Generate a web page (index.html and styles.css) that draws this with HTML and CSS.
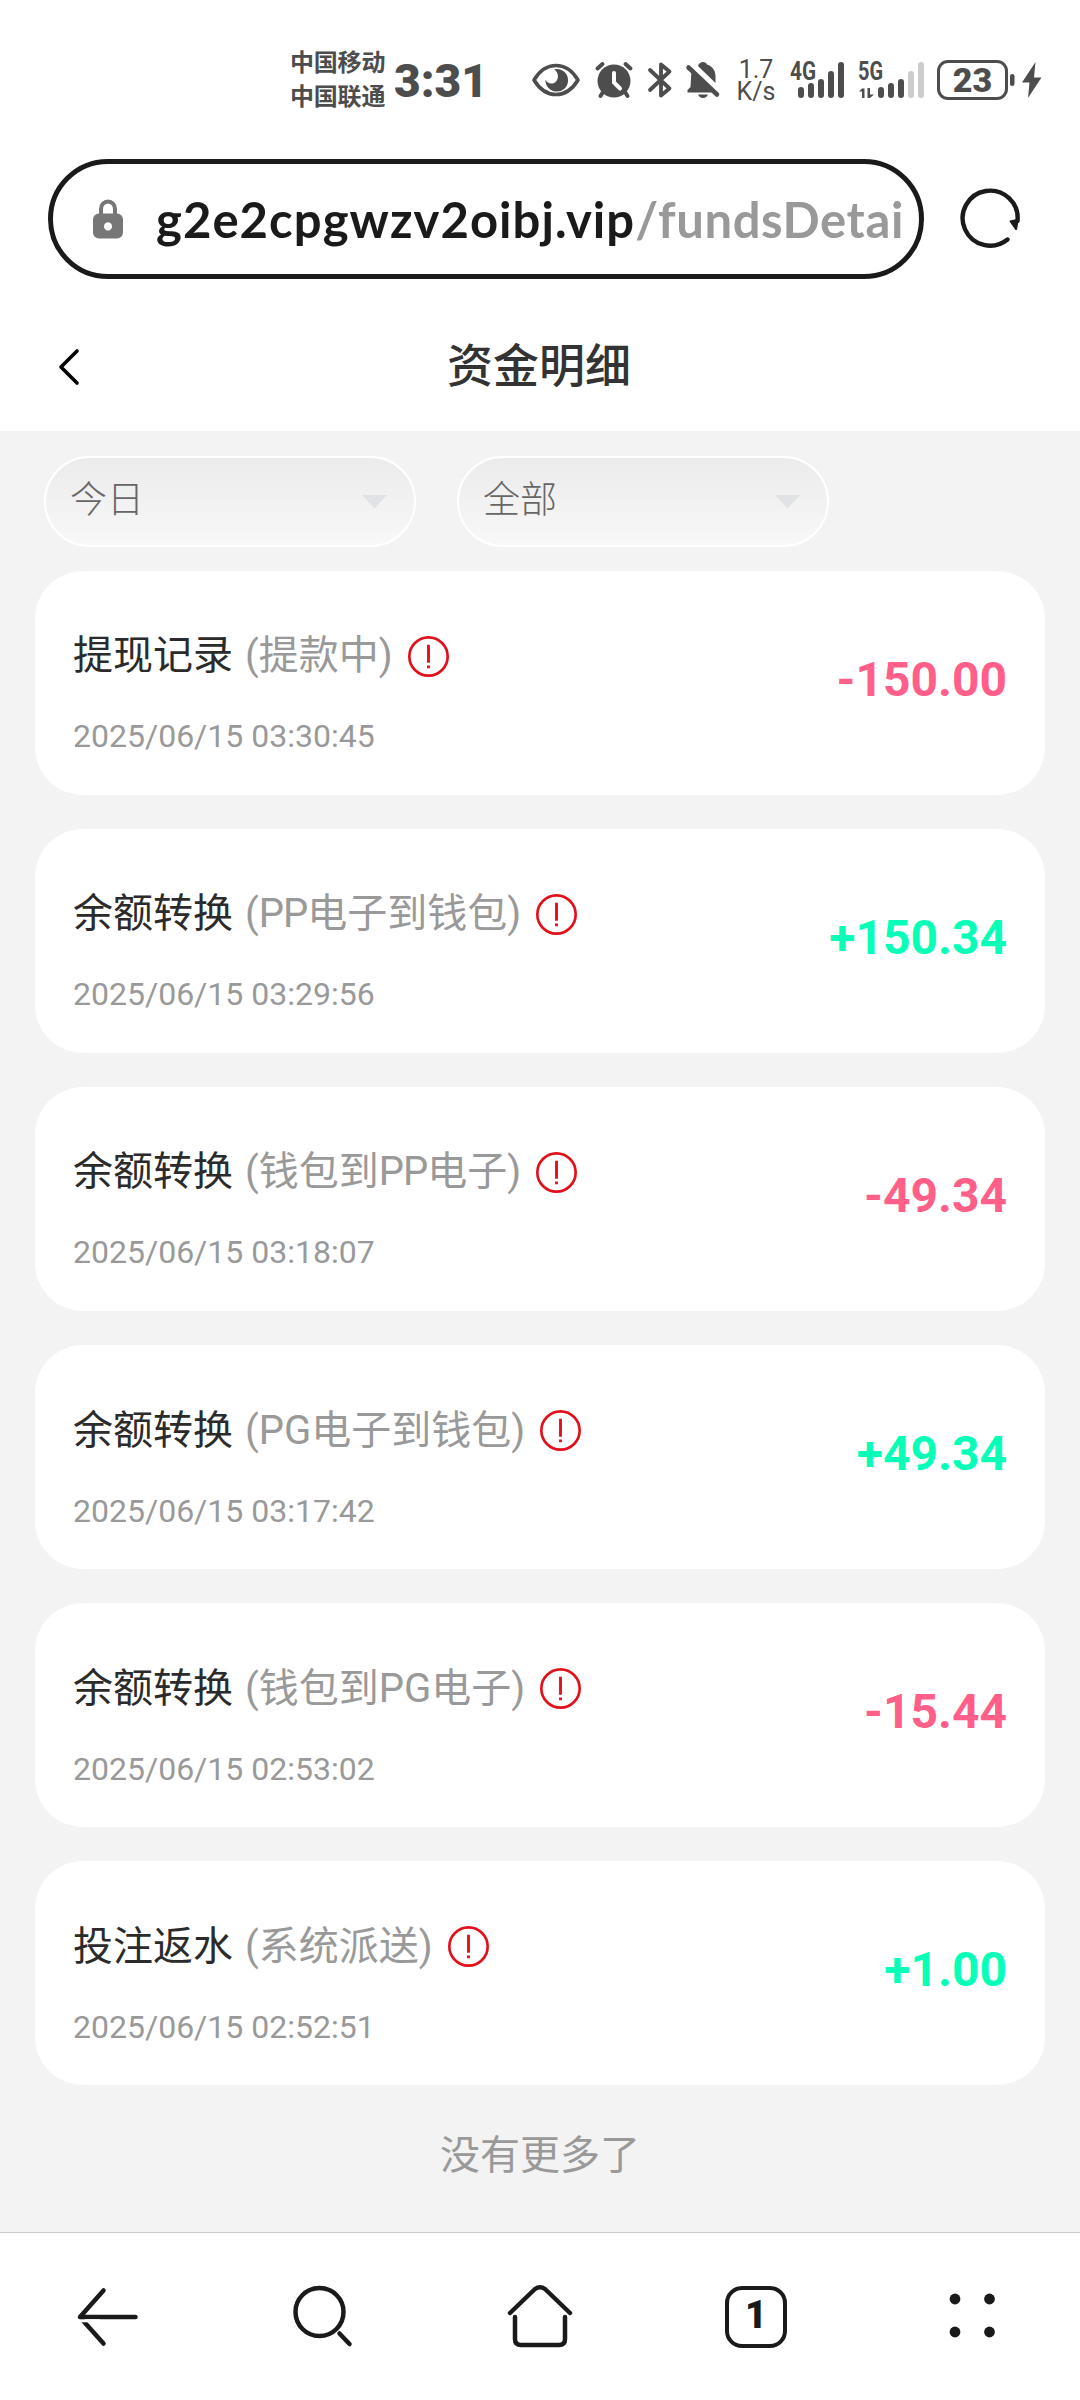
FILE: index.html
```html
<!DOCTYPE html>
<html lang="zh-CN">
<head>
<meta charset="utf-8">
<title>资金明细</title>
<link rel="stylesheet" href="styles.css">
</head>
<body>
<svg class="defs" width="0" height="0" aria-hidden="true">
  <symbol id="alert" viewBox="0 0 40 40">
    <circle cx="20" cy="20" r="18.7" fill="none" stroke="#e1101b" stroke-width="2.6"/>
    <path d="M18.6 8.5h2.8v17.5h-2.8zM18.6 28.7h2.8v2.8h-2.8z" fill="#e1101b"/>
  </symbol>
</svg>
<div class="screen">
  <header class="status">
    <div class="carriers"><span>中国移动</span><span>中国联通</span></div>
    <div class="clock">3:31</div>
    <svg class="eye" width="48" height="34" viewBox="0 0 48 34">
      <path d="M2 17C8 7 16 2.5 24 2.5S40 7 46 17C40 27 32 31.500 24 31.500S8 27 2 17Z" fill="none" stroke="#4d4d4d" stroke-width="3.6" stroke-linejoin="round"/>
      <path d="M25 6A11.300 11.300 0 1 1 13.500 16.500C15 20.500 20 22 23.500 19C27 16 27 9.500 22 6.300Z" fill="#4d4d4d"/>
    </svg>
    <svg class="alarm" width="38" height="38" viewBox="0 0 38 38">
      <g stroke="#4d4d4d" stroke-width="4" stroke-linecap="round"><path d="M2.500 7.500 7.500 3M35.500 7.500 30.500 3M8 31 5.500 35M30 31l2.500 4"/></g>
      <circle cx="19" cy="20" r="16.500" fill="#4d4d4d"/>
      <path d="M19 12v9.500l6 6" fill="none" stroke="#fff" stroke-width="4" stroke-linecap="round"/>
    </svg>
    <svg class="bluetooth" width="24" height="38" viewBox="0 0 24 38">
      <path d="M2 9 21.500 27.500 13 34.500V3.500L21.500 10.500 2 29" fill="none" stroke="#4d4d4d" stroke-width="3.800" stroke-linecap="round" stroke-linejoin="round"/>
    </svg>
    <svg class="bell" width="34" height="38" viewBox="0 0 34 38">
      <path d="M5.500 9 28 31.500H1.500V29L4.500 26ZM12 5C13 2 15 1 17 1S20.500 2 21 3.500C27 5.500 29.500 10 29.500 15V22Z M12 33.500h10C21 36 19 37 17 37S13 36 12 33.500Z" fill="#4d4d4d"/>
      <path d="M2.500 6.500 31 33.500" stroke="#4d4d4d" stroke-width="4.500" stroke-linecap="round"/>
    </svg>
    <div class="speed"><span>1.7</span><span>K/s</span></div>
    <svg class="signal" width="54" height="38" viewBox="0 0 54 38">
      <text x="0" y="18.500" textLength="26" lengthAdjust="spacingAndGlyphs">4G</text>
      <path d="M11 29v5M21 25v9M31 21v13M41 13v21M51 4v30"/>
    </svg>
    <svg class="signal second" width="66" height="38" viewBox="0 0 66 38">
      <text x="0" y="18.500" textLength="25" lengthAdjust="spacingAndGlyphs">5G</text>
      <path d="M23 29v5M33 25v9M43 21v13"/>
      <path class="off" d="M53 13v21M63 4v30"/>
      <path class="data" d="M1 30.500 4 27.500H6.500V37H4V30.500ZM9.500 27H12V33.500H16L12 37H9.500Z"/>
    </svg>
    <div class="battery">23</div>
    <svg class="bolt" width="32" height="38" viewBox="0 0 32 38">
      <rect x="0" y="13" width="4.500" height="12" rx="2.200" fill="#4d4d4d"/>
      <path d="M25.500 1 12 21.500h7.500L18 37 31.500 16.500H24Z" fill="#4d4d4d"/>
    </svg>
  </header>

  <div class="address-row">
    <div class="address">
      <svg width="30" height="40" viewBox="0 0 30 40">
        <path d="M8 16V10a7 7.500 0 0 1 14 0v6" fill="none" stroke="#777" stroke-width="4"/>
        <path fill-rule="evenodd" d="M6 14.500H24a6 6 0 0 1 6 6V33.500a6 6 0 0 1-6 6H6a6 6 0 0 1-6-6V20.500a6 6 0 0 1 6-6ZM15 23.200a4 4.200 0 1 0 .01 0Z" fill="#777"/>
      </svg>
      <div class="url"><span class="host">g2e2cpgwzv2oibj.vip</span><span class="path">/fundsDetai</span></div>
    </div>
    <svg class="reload" width="62" height="62" viewBox="0 0 62 62">
      <path d="M48.500 51.500A27.500 27.500 0 1 1 58.500 33" fill="none" stroke="#1a1a1a" stroke-width="4.400" stroke-linecap="round"/>
      <path d="M51 32.500 60 30.500 58 41.500Q56.500 43 55.500 40.500L50.500 33.500Z" fill="#1a1a1a"/>
    </svg>
  </div>

  <div class="titlebar">
    <svg class="back" width="22" height="38" viewBox="0 0 22 38"><path d="M19 3 3 19 19 35" fill="none" stroke="#000" stroke-width="3.600" stroke-linecap="round" stroke-linejoin="round"/></svg>
    <h1>资金明细</h1>
  </div>

  <main>
    <div class="filters">
      <div class="filter"><span>今日</span><svg width="25" height="14" viewBox="0 0 25 14"><path d="M0 0H25L12.500 13.500Z" fill="#e0e2e5"/></svg></div>
      <div class="filter"><span>全部</span><svg width="25" height="14" viewBox="0 0 25 14"><path d="M0 0H25L12.500 13.500Z" fill="#e0e2e5"/></svg></div>
    </div>
    <ul class="records">
      <li class="card">
        <div class="info"><p class="name">提现记录<span class="note">(提款中)</span><svg class="alert"><use href="#alert"/></svg></p><time>2025/06/15 03:30:45</time></div>
        <strong class="out">-150.00</strong>
      </li>
      <li class="card">
        <div class="info"><p class="name">余额转换<span class="note">(<i>PP</i>电子到钱包)</span><svg class="alert"><use href="#alert"/></svg></p><time>2025/06/15 03:29:56</time></div>
        <strong class="in">+150.34</strong>
      </li>
      <li class="card">
        <div class="info"><p class="name">余额转换<span class="note">(钱包到<i>PP</i>电子)</span><svg class="alert"><use href="#alert"/></svg></p><time>2025/06/15 03:18:07</time></div>
        <strong class="out">-49.34</strong>
      </li>
      <li class="card">
        <div class="info"><p class="name">余额转换<span class="note">(<i class="wide">PG</i>电子到钱包)</span><svg class="alert"><use href="#alert"/></svg></p><time>2025/06/15 03:17:42</time></div>
        <strong class="in">+49.34</strong>
      </li>
      <li class="card">
        <div class="info"><p class="name">余额转换<span class="note">(钱包到<i class="wide">PG</i>电子)</span><svg class="alert"><use href="#alert"/></svg></p><time>2025/06/15 02:53:02</time></div>
        <strong class="out">-15.44</strong>
      </li>
      <li class="card">
        <div class="info"><p class="name">投注返水<span class="note">(系统派送)</span><svg class="alert"><use href="#alert"/></svg></p><time>2025/06/15 02:52:51</time></div>
        <strong class="in">+1.00</strong>
      </li>
    </ul>
    <p class="end">没有更多了</p>
  </main>

  <nav class="toolbar">
    <svg width="64" height="64" viewBox="0 0 64 64"><path d="M27.500 5.500 4 32H59.500M27.500 58.500 6 34.500" /><path class="gap" d="M2 35.800H24"/></svg>
    <svg width="64" height="64" viewBox="0 0 64 64"><circle cx="27.500" cy="27" r="24"/><path d="M47.500 48.500 57.500 59"/></svg>
    <svg width="68" height="64" viewBox="0 0 68 64"><path d="M4 28 29 4Q34 .500 39 4L64 28M9 32V54Q9 60 15 60H53Q59 60 59 54V32"/></svg>
    <div class="tabs">1</div>
    <svg width="64" height="64" viewBox="0 0 64 64"><g class="dots"><circle cx="15" cy="14" r="5.400"/><circle cx="49.500" cy="14" r="5.400"/><circle cx="15" cy="47" r="5.400"/><circle cx="49.500" cy="47" r="5.400"/></g></svg>
  </nav>
</div>
</body>
</html>
```
FILE: styles.css
```css
* { box-sizing: border-box; margin: 0; padding: 0; }
body { background: #fff; font-family: Roboto, "Noto Sans CJK SC", sans-serif; }
.defs { position: absolute; }
.screen { width: 1080px; height: 2400px; display: flex; flex-direction: column; background: #fff; overflow: hidden; }
svg { flex: none; display: block; overflow: visible; }

.status { height: 159px; display: flex; align-items: center; padding-left: 290px; color: #4d4d4d; }
.carriers { width: 96px; display: flex; flex-direction: column; font-size: 24px; font-weight: 700; line-height: 34px; letter-spacing: -.2px; white-space: nowrap; }
.clock { width: 92px; margin-left: 8px; font-size: 46px; font-weight: 900; line-height: 54px; padding-top: 3px; }
.eye { margin-left: 46px; }
.alarm { margin-left: 15px; }
.bluetooth { margin-left: 15px; }
.bell { margin-left: 14px; }
.speed { width: 38px; margin-left: 17px; display: flex; flex-direction: column; align-items: center; font-size: 25px; line-height: 22px; padding-top: 3px; }
.signal { margin-left: 15px; }
.signal.second { margin-left: 14px; }
.signal text { font-size: 25px; font-weight: 700; fill: #4d4d4d; }
.signal path { fill: none; stroke: #4d4d4d; stroke-width: 6px; stroke-linecap: round; }
.signal .off { stroke: #ccc; }
.signal .data { fill: #4d4d4d; stroke: none; }
.battery { width: 71px; height: 40px; margin-left: 13px; border: 3px solid #4d4d4d; border-radius: 11px; font-size: 34px; font-weight: 900; line-height: 35px; text-align: center; }
.bolt { margin-left: 2px; }

.address-row { display: flex; align-items: center; height: 120px; padding-left: 48px; }
.address { width: 876px; height: 120px; border: 5px solid #1a1a1a; border-radius: 60px; display: flex; align-items: center; padding-left: 40px; }
.url { margin-left: 33px; font-family: Lato, sans-serif; font-size: 49px; font-weight: 700; line-height: 60px; white-space: nowrap; }
.host { color: #1a1a1a; letter-spacing: 1.05px; }
.path { color: #999; letter-spacing: .6px; }
.reload { margin-left: 35px; }

.titlebar { height: 152px; padding: 21px 60px 0 58px; display: grid; grid-template-columns: 1fr auto 1fr; align-items: center; }
.back { margin-top: 3px; }
h1 { font-size: 46px; font-weight: 500; line-height: 60px; color: #333; }

main { flex: 1; background: #f3f3f3; padding: 25px 35px 0; }
.filters { display: flex; gap: 41px; padding-left: 9px; }
.filter { width: 372px; height: 91px; border: 2px solid #fff; border-radius: 46px; background: linear-gradient(#ebebeb, #f8f8f8); display: flex; align-items: center; justify-content: space-between; padding: 0 27px 0 24px; font-size: 37px; font-weight: 300; line-height: 50px; color: #666; }
.filter span { margin-top: -1px; }
.records { list-style: none; display: flex; flex-direction: column; gap: 34.6px; margin-top: 24px; }
.card { height: 223.5px; border-radius: 48px; background: #fff; display: flex; align-items: center; justify-content: space-between; padding: 0 38px; }
.info { display: flex; flex-direction: column; gap: 36px; padding-top: 23px; }
.name { display: flex; align-items: center; font-size: 40px; line-height: 48px; color: #2b2b2b; white-space: nowrap; }
.note { margin-left: 12px; color: #999; }
.note i { font-style: normal; letter-spacing: -1px; }
.note .wide { letter-spacing: 0; }
.alert { width: 41px; height: 41px; margin-left: 15px; }
time { font-size: 32px; line-height: 40px; color: #999; }
strong { font-size: 48px; font-weight: 700; line-height: 56px; margin-top: -6px; }
.out { color: #ff5f88; }
.in { color: #08ffb8; }
.end { margin-top: 41px; text-align: center; font-size: 40px; line-height: 60px; color: #999; }

.toolbar { height: 168px; border-top: 1px solid #ccc; display: grid; grid-template-columns: repeat(5, 1fr); justify-items: center; align-items: center; }
.toolbar svg { fill: none; stroke: #1a1a1a; stroke-width: 4.5px; stroke-linecap: round; stroke-linejoin: round; }
.toolbar .gap { stroke: #fff; stroke-width: 3px; stroke-linecap: butt; }
.toolbar .dots { fill: #1a1a1a; stroke: none; }
.tabs { width: 62px; height: 62px; border: 4.5px solid #1a1a1a; border-radius: 17px; font-size: 38px; font-weight: 900; line-height: 51px; text-align: center; color: #1a1a1a; }
```
